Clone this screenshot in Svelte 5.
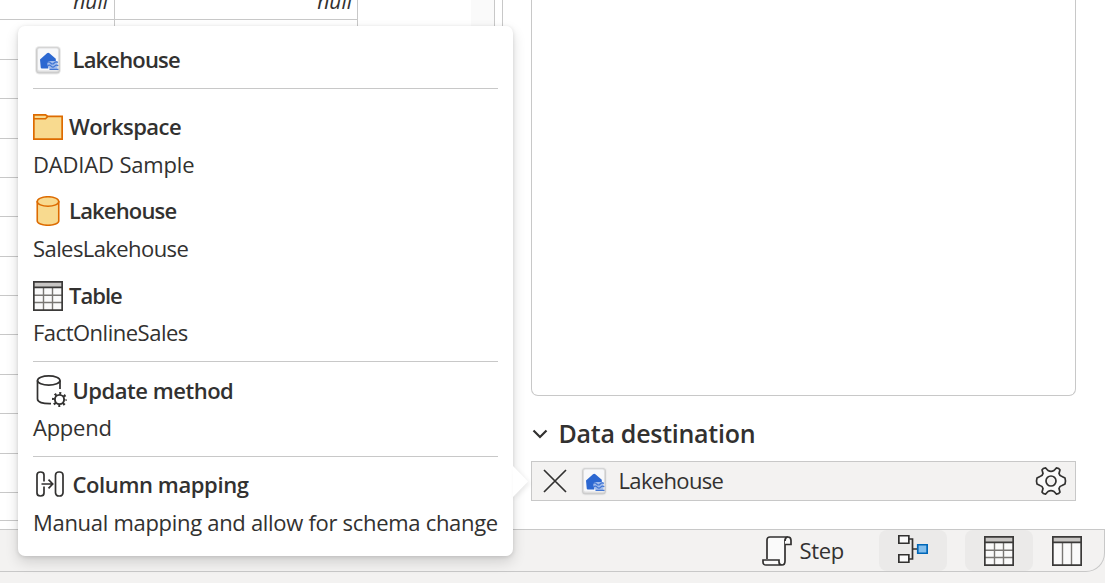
<script>
  const rowHeights = [20, 40, 39, 40, 39, 39, 40, 39, 39, 40, 39, 40, 39, 28];
</script>

{#snippet lakehouseIcon()}
  <svg class="lake" width="28" height="30" viewBox="0 0 28 30">
    <rect x="1" y="1" width="26" height="28.500" rx="4.500" fill="#ebebeb" />
    <rect x="2" y="2" width="24" height="26.500" rx="3.500" fill="#cdcdcd" />
    <rect x="3" y="2.500" width="22" height="24.500" rx="2.500" fill="#dedede" />
    <rect x="4" y="3.500" width="20" height="22" rx="1.500" fill="#f7f8fa" />
    <path d="M6 14.500 13 8.200q1.200-.8 2.400 0l6.400 5.500v3.300l-2 1-3-.6-2.500 2v4.100H7.500Q6.500 23 6.600 21z" fill="#2b67d1" />
    <path d="M13 17.500q2-2 5-1.500h5.500v8.500h-7.500q-3-3-3-7z" fill="#a3bdec" />
    <path d="M13 18q1.800-2 3.600 0t3.600 0 3.600-.5M13.500 21.200q1.800-2 3.600 0t3.600 0 3.600-.5M15.500 24.300h9" fill="none" stroke="#4377d4" stroke-width="1.200" />
  </svg>
{/snippet}

{#snippet tableIcon(columnsOnly)}
  <svg width="30" height="30" viewBox="0 0 30 30">
    <rect width="30" height="30" fill="#fafafa" />
    <rect x="1" y="1" width="28" height="5" fill="#c8c6c4" />
    {#if columnsOnly}
      <path d="M10.500 7v22M19.500 7v22" stroke="#797774" stroke-width="1.400" />
    {:else}
      <path d="M10.500 7v22M19.500 7v22M1 14.200h28M1 21.500h28" stroke="#797774" stroke-width="1.400" />
    {/if}
    <path d="M.85 .85h28.300v28.300H.85zM1 6.300h28" fill="none" stroke="#3b3a39" stroke-width="1.700" />
  </svg>
{/snippet}

<div class="page">
  <main>
    <section class="grid">
      {#each rowHeights as height, i}
        <div class="row" style="height: {height}px">
          {#if i < 2}
            <span class="cell first">{i === 0 ? 'null' : ''}</span>
            <span class="cell second">{i === 0 ? 'null' : ''}</span>
          {/if}
        </div>
      {/each}
      <div class="scroll"></div>
    </section>

    <aside>
      <div class="steps"></div>
      <h2>
        <svg width="16" height="10" viewBox="0 0 16 10"><path d="M1.500 1.500 8 8l6.500-6.500" fill="none" stroke="#323130" stroke-width="2.200" /></svg>
        <span class="t-dest">Data destination</span>
      </h2>
      <div class="destination">
        <svg class="close" width="24" height="24" viewBox="0 0 24 24"><path d="M1 1l22 22M23 1 1 23" stroke="#323130" stroke-width="1.700" /></svg>
        {@render lakehouseIcon()}
        <span class="t-chip">Lakehouse</span>
        <svg class="gear" width="32" height="30" viewBox="-16 -15 32 30">
          <path d="M-3 -10.500L-5.500 -13.100Q-8 -13 -9 -11.200L-8 -7.500Q-8.500 -5 -11 -4.500L-14 -3Q-15 0 -14 3L-11 4.500Q-8.500 5 -8 7.500L-9 11.200Q-8 13 -5.500 13.100L-3 10.500Q0 8.700 3 10.500L5.500 13.100Q8 13 9 11.200L8 7.500Q8.500 5 11 4.500L14 3Q15 0 14 -3L11 -4.500Q8.500 -5 8 -7.500L9 -11.200Q8 -13 5.500 -13.100L3 -10.500Q0 -8.700 -3 -10.500Z" fill="#fafafa" stroke="#323130" stroke-width="1.700" stroke-linejoin="round" />
          <circle r="5" fill="#f3f2f1" stroke="#323130" stroke-width="1.700" />
        </svg>
      </div>
    </aside>
  </main>

  <footer>
    <div class="step">
      <svg width="30" height="30" viewBox="0 0 30 30">
        <path d="M5 23V4Q5 1 8 1H26Q23 1 23 5V25Q23 29 20 29H4Q1 29 1 26V24H17V26Q17 29 20 29" fill="#fafafa" stroke="#323130" stroke-width="1.700" />
        <path d="M23 8.500h6V4.500Q29 1 26 1Q23.500 1 23 5" fill="#fafafa" stroke="#323130" stroke-width="1.700" />
      </svg>
      <span class="t-step">Step</span>
    </div>
    <div class="tool diagram">
      <svg width="30" height="30" viewBox="0 0 30 30">
        <path d="M11 5h3.500v20H11M14.500 15H20" fill="none" stroke="#323130" stroke-width="1.700" />
        <path d="M.85 1.750h10v7.500h-10zM.85 20.750h10v7.500h-10z" fill="#fafafa" stroke="#323130" stroke-width="1.700" />
        <path d="M19.750 10.750h9.400v8.500h-9.400z" fill="#83beec" stroke="#0067b8" stroke-width="1.700" />
      </svg>
    </div>
    <div class="tool data">{@render tableIcon(false)}</div>
    <div class="tool schema">{@render tableIcon(true)}</div>
  </footer>
</div>

<div class="popover">
  <svg class="arrow" width="16" height="32" viewBox="0 0 16 32"><path d="M0 0 15 15.500 0 31z" fill="#fff" /></svg>
  <div class="head">{@render lakehouseIcon()}<b class="t-lake">Lakehouse</b></div>
  <div class="group items">
    <div class="label">
      <svg width="30" height="26" viewBox="0 0 30 26">
        <path d="M.85 .85H12.500L14.500 2.300H29.150V25.150H.85z" fill="#f8da8f" stroke="#dd6b00" stroke-width="1.700" />
        <path d="M1 4.700H12.500L14.500 2.700" fill="none" stroke="#dd6b00" stroke-width="1.600" />
      </svg>
      <b class="t-work">Workspace</b>
    </div>
    <div class="value t-dadiad">DADIAD Sample</div>
    <div class="label second-label">
      <svg width="30" height="30" viewBox="0 0 30 30">
        <path d="M4.250 5v20c0 2.400 4.900 4.250 10.750 4.250S25.750 27.400 25.750 25V5" fill="#f8da8f" stroke="#dd6b00" stroke-width="1.600" />
        <ellipse cx="15" cy="5.500" rx="10.750" ry="4.750" fill="#f8da8f" stroke="#dd6b00" stroke-width="1.600" />
      </svg>
      <b class="t-lake">Lakehouse</b>
    </div>
    <div class="value t-sales">SalesLakehouse</div>
    <div class="label third-label">{@render tableIcon(false)}<b class="t-table">Table</b></div>
    <div class="value t-fact">FactOnlineSales</div>
  </div>
  <div class="group update">
    <div class="label wide">
      <svg width="34" height="34" viewBox="0 0 34 34">
        <ellipse cx="15.750" cy="6.500" rx="11.250" ry="4.700" fill="none" stroke="#323130" stroke-width="1.700" />
        <path d="M4.500 6.500v18.500c0 3.200 5 4.800 13.500 4.600M27 6.500v8.500" fill="none" stroke="#323130" stroke-width="1.700" />
        <circle cx="26.500" cy="25.500" r="4.600" fill="none" stroke="#323130" stroke-width="1.900" />
        <circle cx="26.500" cy="25.500" r="6.200" fill="none" stroke="#323130" stroke-width="2.600" stroke-dasharray="2 2.870" stroke-dashoffset="1" />
      </svg>
      <b class="t-update">Update method</b>
    </div>
    <div class="value t-append">Append</div>
  </div>
  <div class="group mapping">
    <div class="label wide">
      <svg width="34" height="30" viewBox="0 0 34 30">
        <path d="M11 12.500V6Q11 3 7.500 3T4 6V24Q4 27 7.500 27T11 24V17.500" fill="none" stroke="#323130" stroke-width="1.700" />
        <rect x="22.500" y="3" width="7.500" height="24" rx="3.300" fill="none" stroke="#323130" stroke-width="1.700" />
        <path d="M8.500 15h11M15.500 10.700 19.700 15l-4.200 4.300" fill="none" stroke="#323130" stroke-width="1.700" />
      </svg>
      <b class="t-column">Column mapping</b>
    </div>
    <div class="value t-manual">Manual mapping and allow for schema change</div>
  </div>
</div>

<style>
  :global(body) { margin: 0; overflow: hidden; background: #f3f2f1; }
  .page, .popover { font-family: "Open Sans", "Noto Sans", sans-serif; font-size: 22px; color: #323130; white-space: nowrap; }
  * { box-sizing: border-box; }
  svg { display: block; flex: none; }
  b { font-weight: 600; padding-bottom: 2px; }
  .page { width: 1105px; height: 583px; overflow: hidden; }
  main { display: flex; height: 529px; background: #fff; }
  .grid { position: relative; width: 495px; border-right: 1px solid #c8c8c8; }
  .row { width: 358px; border-bottom: 1px solid #c8c8c8; display: flex; }
  .cell { border-right: 1px solid #c8c8c8; font-style: italic; font-size: 21px; text-align: right; padding-right: 6px; height: 100%; }
  .cell.first { width: 115px; }
  .cell.second { width: 243px; padding-right: 5px; }
  .row:first-child .cell { line-height: 3px; }
  .scroll { position: absolute; top: 0; right: 0; width: 23px; height: 520px; background: #fafafa; }
  aside { margin-left: 7px; flex: 1; border-left: 1px solid #c8c8c8; padding: 0 29px 0 28px; }
  .steps { height: 396px; border: 1px solid #c8c8c8; border-top: 0; border-radius: 0 0 7px 7px; }
  h2 { margin: 22px 0 0; height: 32px; line-height: 32px; display: flex; align-items: center; padding-left: 1px; gap: 10.500px; font-size: 25px; font-weight: 600; }
  h2 span, .destination span, .step span { padding-bottom: 2px; }
  .destination { margin-top: 11px; height: 40px; border: 1px solid #c8c8c8; background: #f3f2f1; display: flex; align-items: center; padding: 0 8px 0 11px; }
  .destination .lake { margin-left: 13px; margin-right: 10.500px; }
  .gear { margin-left: auto; }
  footer { height: 43px; border: 1px solid #c8c8c8; border-left: 0; border-radius: 0 0 19px 0; display: flex; align-items: stretch; padding-left: 762px; }
  .step { display: flex; align-items: center; gap: 7.500px; width: 117px; }
  .tool { width: 68px; display: flex; align-items: center; justify-content: center; border-radius: 8px; }
  .diagram, .data { background: #ebeae9; }
  .diagram svg { margin-top: -3px; }
  .data { margin-left: 18px; }
  .popover { position: absolute; left: 18px; top: 26px; width: 495px; height: 530px; padding: 0 15px; background: #fff; border-radius: 7px; box-shadow: 0 6px 14px rgba(0,0,0,.14), 0 1px 4px rgba(0,0,0,.12); }
  .arrow { position: absolute; left: 495px; top: 440px; filter: drop-shadow(2px 2px 2px rgba(0,0,0,.08)); }
  .head { height: 63px; display: flex; align-items: center; padding: 5px 0 0 1px; gap: 10.500px; border-bottom: 1px solid #c8c8c8; }
  .label { height: 42px; display: flex; align-items: center; gap: 6px; }
  .label.wide { gap: 5.500px; }
  .value { height: 42px; line-height: 42px; margin-top: -5px; }
  .items { height: 273px; padding-top: 17px; border-bottom: 1px solid #c8c8c8; }
  .second-label { margin-top: 5px; }
  .third-label { margin-top: 6px; }
  .third-label + .value, .update .value { margin-top: -6px; }
  .update { height: 95px; padding-top: 8px; border-bottom: 1px solid #c8c8c8; }
  .mapping { padding-top: 6px; }
  .mapping b { padding-bottom: 0; }
  .mapping .value { margin-top: -4px; }
  .t-lake { letter-spacing: -.83px; }
  .t-work { letter-spacing: -.56px; }
  .t-dadiad { letter-spacing: -.17px; }
  .t-sales { letter-spacing: -.58px; }
  .t-table { letter-spacing: -1px; }
  .t-fact { letter-spacing: -.49px; }
  .t-update { letter-spacing: -.48px; }
  .t-append { letter-spacing: -.25px; }
  .t-column { letter-spacing: -.4px; }
  .t-manual { letter-spacing: -.3px; }
  .t-dest { letter-spacing: -.27px; }
  .t-chip { letter-spacing: -.66px; }
  .t-step { letter-spacing: -.3px; }
</style>
